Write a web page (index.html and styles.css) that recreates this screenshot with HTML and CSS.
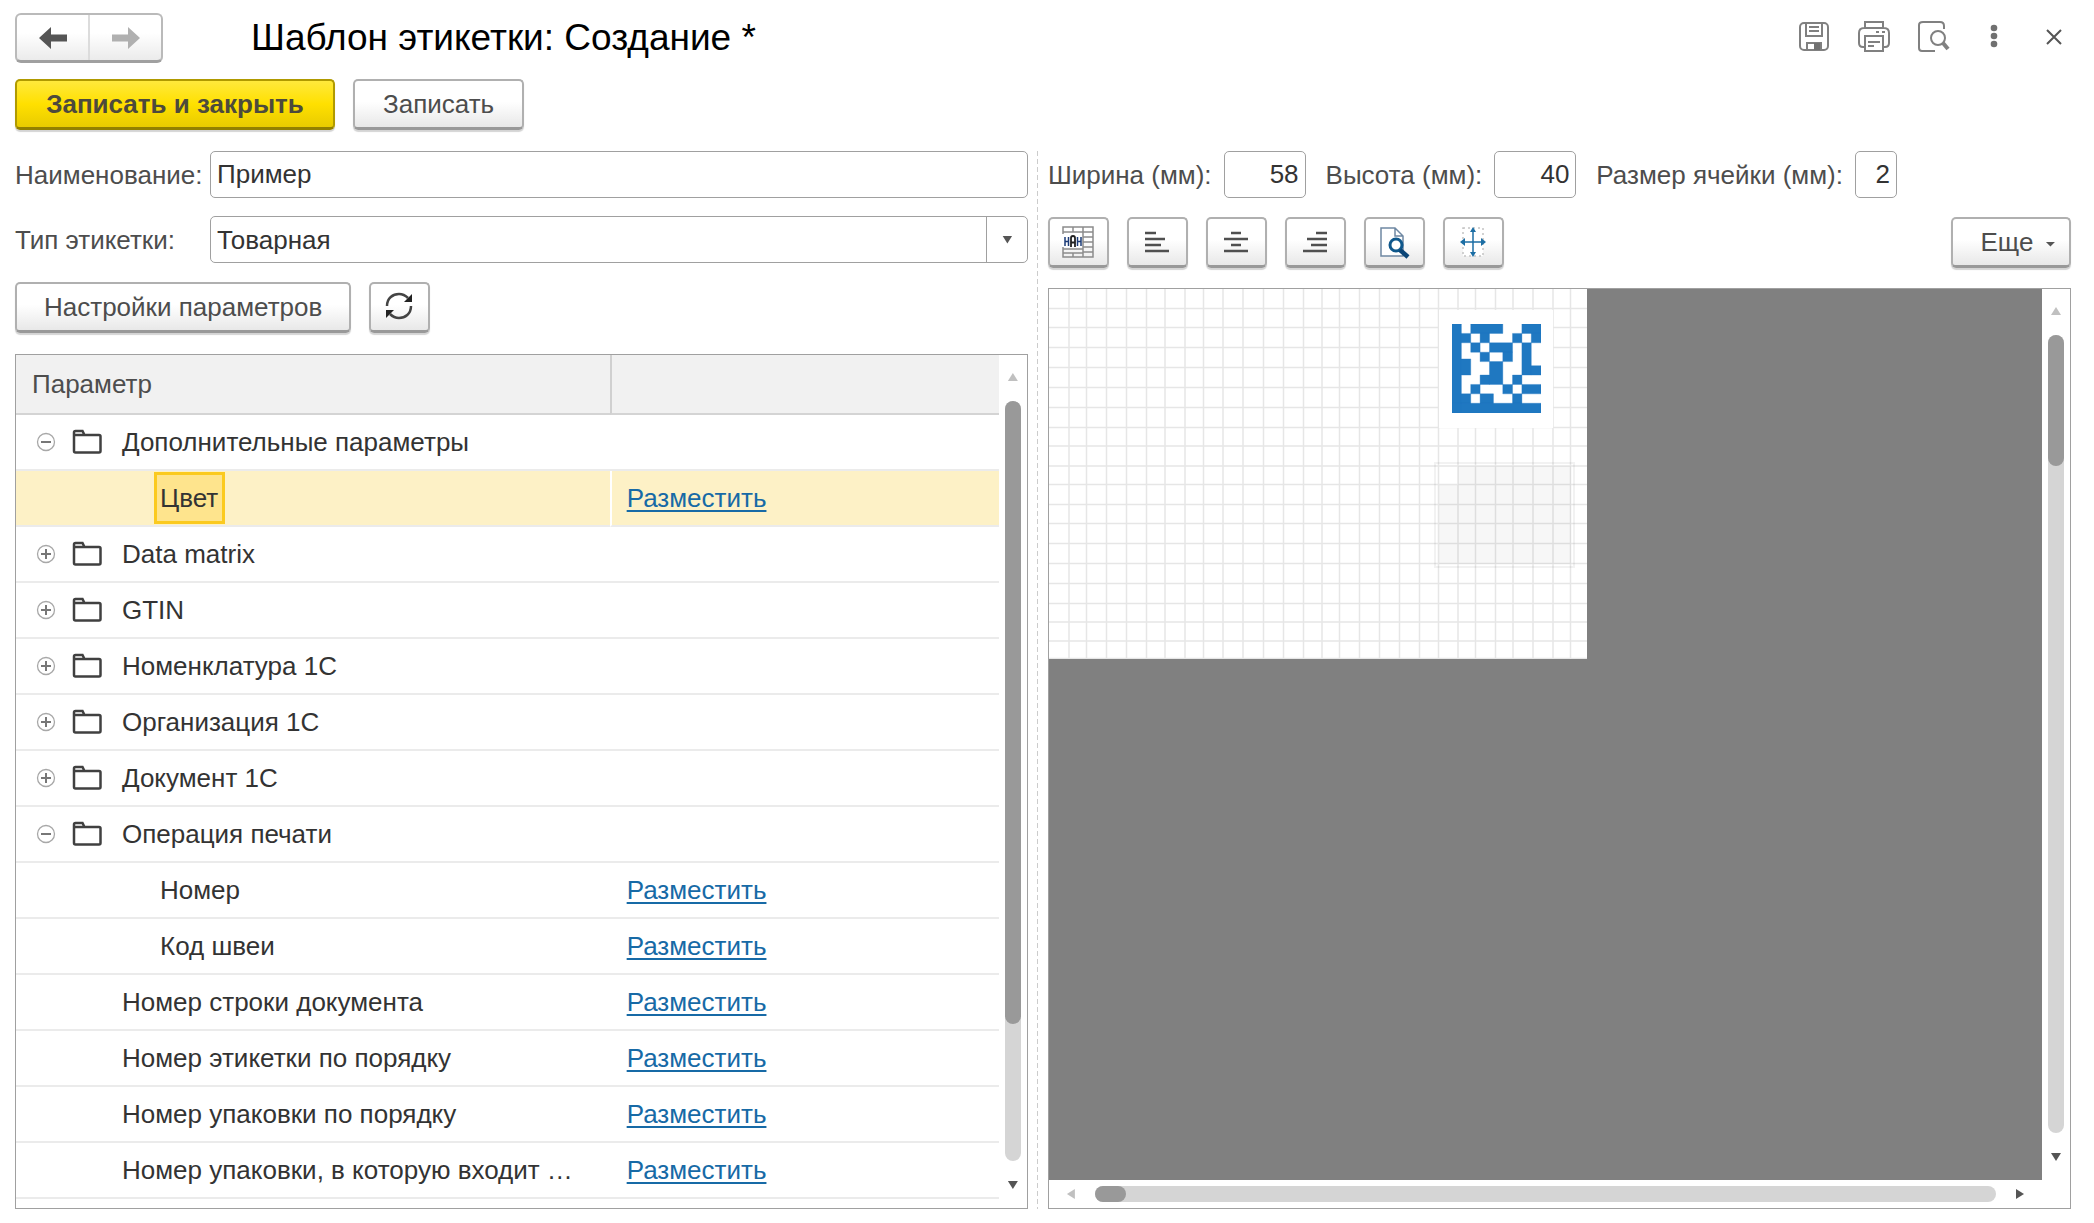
FILE: index.html
```html
<!DOCTYPE html>
<html lang="ru">
<head>
<meta charset="utf-8">
<title>Шаблон этикетки: Создание *</title>
<link rel="stylesheet" href="styles.css">
</head>
<body>
<svg class="symbols" aria-hidden="true">
  <symbol id="folder" viewBox="0 0 30 26"><path d="M2 22V3.500q0-1.500 1.500-1.500h7l2 4H27q1.500 0 1.500 1.500V22q0 1.500-1.500 1.500H3.500Q2 23.500 2 22M2 6h12" fill="none" stroke="#404040" stroke-width="2.500"/></symbol>
  <symbol id="minus" viewBox="0 0 20 20"><circle cx="10" cy="10" r="8.500" fill="none" stroke="#a8a8a8" stroke-width="1.300"/><path d="M5 10h10" stroke="#777" stroke-width="2"/></symbol>
  <symbol id="plus" viewBox="0 0 20 20"><circle cx="10" cy="10" r="8.500" fill="none" stroke="#a8a8a8" stroke-width="1.300"/><path d="M5 10h10M10 5v10" stroke="#777" stroke-width="2"/></symbol>
</svg>
<div class="window">
  <header class="titlebar">
    <div class="history">
      <button type="button" aria-label="Назад"><svg width="30" height="24" viewBox="0 0 30 24"><path d="M1 12 13 1v7.500h16v7H13V23z" fill="#555"/></svg></button>
      <button type="button" aria-label="Вперед"><svg width="30" height="24" viewBox="0 0 30 24"><path d="M29 12 17 1v7.500H1v7h16V23z" fill="#b0b0b0"/></svg></button>
    </div>
    <h1>Шаблон этикетки: Создание *</h1>
    <div class="tools">
      <button type="button" aria-label="Сохранить"><svg width="32" height="32" viewBox="0 0 32 32" fill="none" stroke="#808080" stroke-width="2"><rect x="2" y="2" width="28" height="27" rx="4"/><path d="M8 2v13h16V2M11 6h10M11 10h10M9 29v-7h14v7"/><path d="M16 22h6v7h-6z" fill="#707070" stroke="none"/></svg></button>
      <button type="button" aria-label="Печать"><svg width="32" height="32" viewBox="0 0 32 32" fill="none" stroke="#808080" stroke-width="2"><path d="M7 7V1h18v6M7 26H5q-4 0-4-4V12q0-5 5-5h20q5 0 5 5v10q0 4-4 4h-2M7 15h18v15H7zM10 21h12M10 25h6M18 11h3M24 11h3"/></svg></button>
      <button type="button" aria-label="Просмотр"><svg width="32" height="32" viewBox="0 0 32 32" fill="none" stroke="#808080" stroke-width="2"><path d="M26 8V5q0-4-4-4H5Q1 1 1 4v23q0 3 3 3h13"/><circle cx="20" cy="17" r="7"/><path d="m25 22 5 6" stroke-width="4"/></svg></button>
      <button type="button" aria-label="Меню"><svg width="32" height="32" viewBox="0 0 32 32" fill="#707070"><circle cx="16" cy="7" r="3.300"/><circle cx="16" cy="15" r="3.300"/><circle cx="16" cy="23" r="3.300"/></svg></button>
      <button type="button" aria-label="Закрыть"><svg width="32" height="32" viewBox="0 0 32 32"><path d="m9 9 14 14M23 9 9 23" stroke="#555" stroke-width="2"/></svg></button>
    </div>
  </header>
  <div class="commands">
    <button type="button" class="btn primary">Записать и закрыть</button>
    <button type="button" class="btn">Записать</button>
  </div>
  <main class="columns">
    <section class="panel">
      <div class="field"><label for="name">Наименование:</label><input id="name" class="box" type="text" value="Пример"></div>
      <div class="field"><label for="kind">Тип этикетки:</label>
        <div class="combo"><select id="kind" class="box"><option>Товарная</option></select><span class="combo-mark"><i class="arrow down"></i></span></div>
      </div>
      <div class="row">
        <button type="button" class="btn">Настройки параметров</button>
        <button type="button" class="btn icon" aria-label="Обновить"><svg width="32" height="32" viewBox="0 0 32 32"><path d="M3 15C3 7 9 3 15 3c4 0 7 2 9 4M27 15c0 8-6 12-12 12-4 0-7-2-9-4" fill="none" stroke="#444" stroke-width="2.500"/><path d="M28 3v8h-8zM2 27v-8h8z" fill="#222"/></svg></button>
      </div>
      <div class="list">
        <div class="list-view">
          <table>
            <colgroup><col class="col-name"><col></colgroup>
            <thead><tr><th>Параметр</th><th></th></tr></thead>
            <tbody>
              <tr><td><div class="cell"><svg class="twig"><use href="#minus"/></svg><svg class="folder"><use href="#folder"/></svg>Дополнительные параметры</div></td><td></td></tr>
              <tr class="selected"><td><div class="cell child"><span class="current">Цвет</span></div></td><td><a href="#">Разместить</a></td></tr>
              <tr><td><div class="cell"><svg class="twig"><use href="#plus"/></svg><svg class="folder"><use href="#folder"/></svg>Data matrix</div></td><td></td></tr>
              <tr><td><div class="cell"><svg class="twig"><use href="#plus"/></svg><svg class="folder"><use href="#folder"/></svg>GTIN</div></td><td></td></tr>
              <tr><td><div class="cell"><svg class="twig"><use href="#plus"/></svg><svg class="folder"><use href="#folder"/></svg>Номенклатура 1С</div></td><td></td></tr>
              <tr><td><div class="cell"><svg class="twig"><use href="#plus"/></svg><svg class="folder"><use href="#folder"/></svg>Организация 1С</div></td><td></td></tr>
              <tr><td><div class="cell"><svg class="twig"><use href="#plus"/></svg><svg class="folder"><use href="#folder"/></svg>Документ 1С</div></td><td></td></tr>
              <tr><td><div class="cell"><svg class="twig"><use href="#minus"/></svg><svg class="folder"><use href="#folder"/></svg>Операция печати</div></td><td></td></tr>
              <tr><td><div class="cell child">Номер</div></td><td><a href="#">Разместить</a></td></tr>
              <tr><td><div class="cell child">Код швеи</div></td><td><a href="#">Разместить</a></td></tr>
              <tr><td><div class="cell leaf">Номер строки документа</div></td><td><a href="#">Разместить</a></td></tr>
              <tr><td><div class="cell leaf">Номер этикетки по порядку</div></td><td><a href="#">Разместить</a></td></tr>
              <tr><td><div class="cell leaf">Номер упаковки по порядку</div></td><td><a href="#">Разместить</a></td></tr>
              <tr><td><div class="cell leaf">Номер упаковки, в которую входит …</div></td><td><a href="#">Разместить</a></td></tr>
            </tbody>
          </table>
        </div>
        <div class="scroll vertical"><i class="arrow up off"></i><div class="track"><div class="thumb" style="height:82%"></div></div><i class="arrow down"></i></div>
      </div>
    </section>
    <div class="splitter"></div>
    <section class="panel">
      <div class="sizes">
        <label for="w">Ширина (мм):</label><input id="w" class="box num" type="text" value="58">
        <label for="h">Высота (мм):</label><input id="h" class="box num" type="text" value="40">
        <label for="c">Размер ячейки (мм):</label><input id="c" class="box num small" type="text" value="2">
      </div>
      <div class="row toolbar">
        <button type="button" class="btn icon" aria-label="Ширина ячейки"><svg width="34" height="34" viewBox="0 0 34 34"><path d="M2 2h30v30H2zM2 7h30M12 2v5M22 2v30M2 24h20M2 28h20M12 28v4M22 12h10M22 17h10M22 22h10M22 27h10" fill="none" stroke="#8c8c8c" stroke-width="1.500"/><path d="M1 9h20v13H1z" fill="#fff"/><path d="M4 12v9M4 16.500h3M7.500 12v9M20 12v9M20 16.500h-3M16.500 12v9" stroke="#1d3c78" stroke-width="1.500"/><path d="M10 22V13q0-2 2-2t2 2v9M10 17.500h4" fill="none" stroke="#222" stroke-width="1.800"/></svg></button>
        <button type="button" class="btn icon" aria-label="По левому краю"><svg width="26" height="24" viewBox="0 0 26 24"><path d="M1 3h11M1 9h20M1 15h16M1 21h24" stroke="#505050" stroke-width="2.500"/></svg></button>
        <button type="button" class="btn icon" aria-label="По центру"><svg width="26" height="24" viewBox="0 0 26 24"><path d="M8 3h10M1 9h24M8 15h10M1 21h24" stroke="#505050" stroke-width="2.500"/></svg></button>
        <button type="button" class="btn icon" aria-label="По правому краю"><svg width="26" height="24" viewBox="0 0 26 24"><path d="M14 3h11M5 9h20M9 15h16M1 21h24" stroke="#505050" stroke-width="2.500"/></svg></button>
        <button type="button" class="btn icon" aria-label="Предпросмотр"><svg width="32" height="34" viewBox="0 0 32 34"><path d="M3 3h14l8 8v20H3zM17 3v8h8" fill="#fff" stroke="#6f88a3" stroke-width="1.500"/><circle cx="18" cy="20" r="6" fill="#fff" stroke="#0f588c" stroke-width="3"/><path d="m22 25 8 7" stroke="#0b4577" stroke-width="4.500"/></svg></button>
        <button type="button" class="btn icon" aria-label="Переместить"><svg width="28" height="34" viewBox="0 0 28 34"><path d="M4 3h20v28H4z" fill="#fff" stroke="#c4c4c4" stroke-width="1.500" stroke-dasharray="2 3"/><path d="M14 4v26M4 17h20" stroke="#1c6ea4" stroke-width="1.500"/><path d="m14 2 3 5h-6zM14 32l3-5h-6zM1 17l5-4v8zM27 17l-5-4v8z" fill="#1c6ea4"/></svg></button>
        <button type="button" class="btn more">Еще<i class="arrow down tiny"></i></button>
      </div>
      <div class="canvas">
        <div class="field-area">
          <svg class="sheet" width="538" height="370" viewBox="0 0 538 370">
            <rect width="538" height="370" fill="#fff"/>
            <path class="grid" d="M20 0v370M37.500 0v370M57.500 0v370M77.500 0v370M97.500 0v370M116 0v370M136 0v370M154.500 0v370M174 0v370M194 0v370M214.500 0v370M234.500 0v370M254.500 0v370M273 0v370M290.500 0v370M310.500 0v370M330.500 0v370M350.500 0v370M370.500 0v370M389.500 0v370M409 0v370M426.500 0v370M446.500 0v370M464 0v370M484 0v370M504 0v370M521.500 0v370"/>
            <path class="grid" d="M0 19.500h538M0 38.500h538M0 58.500h538M0 78.500h538M0 98.500h538M0 118.500h538M0 138.500h538M0 157h538M0 177h538M0 195.500h538M0 215.500h538M0 234.500h538M0 254.500h538M0 274.500h538M0 294.500h538M0 314.500h538M0 333h538M0 352h538M0 369.500h538"/>
            <rect x="390" y="21" width="114" height="118" fill="#fff"/>
            <svg x="403" y="35" width="89" height="89" viewBox="1155 162 247 265" preserveAspectRatio="none"><path fill="#1f78c1" stroke="#1f78c1" stroke-width="1" d="M1155 162h26v265h-26zM1207 162h89v28h-89zM1349 162h53v28h-53zM1181 190h26v28h-26zM1233 190h26v28h-26zM1323 190h26v28h-26zM1375 190h27v28h-27zM1207 218h26v28h-26zM1259 218h64v28h-64zM1349 218h26v96h-26zM1233 246h26v28h-26zM1296 246h27v28h-27zM1181 266h26v48h-26zM1259 274h37v68h-37zM1375 286h27v28h-27zM1233 314h26v28h-26zM1323 314h26v28h-26zM1207 342h26v28h-26zM1296 342h27v28h-27zM1349 342h53v28h-53zM1181 370h26v28h-26zM1233 370h37v28h-37zM1323 370h26v28h-26zM1155 398h247v29h-247z"/></svg>
            <path d="M409 177h113v98H390v-79h19z" fill="#000" fill-opacity=".03"/>
            <rect x="386" y="174" width="139" height="104" fill="none" stroke="#000" stroke-opacity=".05" stroke-width="2"/>
          </svg>
        </div>
        <div class="scroll vertical"><i class="arrow up off"></i><div class="track"><div class="thumb" style="height:16.400%"></div></div><i class="arrow down"></i></div>
        <div class="scroll horizontal"><i class="arrow left off"></i><div class="track"><div class="thumb" style="width:3.500%"></div></div><i class="arrow right"></i></div>
      </div>
    </section>
  </main>
</div>
</body>
</html>
```
FILE: styles.css
```css
* { box-sizing: border-box; }

body {
  margin: 0;
  background: #fff;
  color: #333;
  font: 26px/32px "Liberation Sans", Arial, sans-serif;
}

button, input, select { font: inherit; color: inherit; }
button { cursor: pointer; }
svg { display: block; flex: none; }
.symbols { position: absolute; width: 0; height: 0; }

.window {
  display: flex;
  flex-direction: column;
  min-height: 100vh;
  padding: 13px 23px 14px 15px;
}

.titlebar { display: flex; align-items: center; height: 50px; }
.titlebar h1 {
  flex: 1;
  margin: 0 0 0 88px;
  color: #000;
  font-size: 37px;
  font-weight: 400;
  line-height: 44px;
}

.history {
  display: flex;
  width: 148px;
  height: 50px;
  border: 2px solid #bababa;
  border-bottom: 3px solid #a0a0a0;
  border-radius: 6px;
  background: linear-gradient(#fff 40%, #ebebeb);
}
.history button {
  display: flex;
  flex: 1;
  align-items: center;
  justify-content: center;
  padding: 0;
  border: 0;
  background: none;
}
.history button + button { border-left: 2px solid #dcdcdc; }

.tools { display: flex; gap: 28px; padding: 0 1px 2px 0; }
.tools button { padding: 0; border: 0; background: none; }

.commands { display: flex; gap: 18px; margin: 16px 0 21px; }

.btn {
  display: flex;
  align-items: center;
  justify-content: center;
  height: 51px;
  padding: 0 27px;
  border: 2px solid #b0b0b0;
  border-bottom: 3px solid #999;
  border-radius: 5px;
  background: linear-gradient(#fff 45%, #e8e8e8);
  box-shadow: 0 2px 1px #d4d4d4;
  color: #4d4d4d;
  white-space: nowrap;
}
.commands .btn { padding: 0 28px; }
.btn.primary {
  min-width: 320px;
  border-color: #b09a00 #b09a00 #928000;
  background: linear-gradient(#ffe93c, #ffe000 50%, #e8cb00);
  color: #4d4a3c;
  font-weight: 700;
}
.btn.icon { width: 61px; padding: 0; }
.btn.more { gap: 12px; width: 120px; margin-left: auto; padding: 0 0 0 14px; }

.columns {
  display: grid;
  flex: 1;
  grid-template-columns: minmax(0, 99fr) 20px minmax(0, 100fr);
}
.panel { display: flex; flex-direction: column; }
.splitter {
  width: 1px;
  margin: 0 auto;
  background: repeating-linear-gradient(#ccc 0 5px, #fff 5px 8px);
}

.field { display: flex; align-items: center; margin-bottom: 18px; color: #4d4d4d; }
.field label { width: 195px; }

.box {
  flex: 1;
  min-width: 0;
  height: 47px;
  padding: 0 6px;
  border: 1px solid #a0a0a0;
  border-radius: 5px;
  background: #fff;
  color: #333;
}
.combo { display: flex; flex: 1; position: relative; }
.combo select { appearance: none; }
.combo-mark {
  display: flex;
  position: absolute;
  inset: 0 0 0 auto;
  align-items: center;
  justify-content: center;
  width: 42px;
  border-left: 1px solid #a0a0a0;
  pointer-events: none;
}

.row { display: flex; gap: 18px; padding-top: 1px; }

.sizes { display: flex; align-items: center; margin-bottom: 18px; color: #4d4d4d; }
.sizes label { margin-right: 12px; white-space: nowrap; }
.box.num { flex: none; width: 82px; margin-right: 20px; text-align: right; }
.box.num.small { width: 42px; }

.list {
  display: flex;
  flex: 1;
  margin-top: 21px;
  border: 1px solid #a0a0a0;
}
.list-view { flex: 1; min-width: 0; }
table { width: 100%; border-spacing: 0; table-layout: fixed; }
.col-name { width: 60.400%; }
th {
  height: 60px;
  padding: 0 16px;
  border-bottom: 2px solid #d4d4d4;
  background: #f1f1f1;
  color: #4d4d4d;
  font-weight: 400;
  text-align: left;
}
th + th { border-left: 2px solid #d0d0d0; }
td { height: 56px; padding: 0; border-bottom: 2px solid #ebebeb; }
td + td { padding-left: 17px; }
.selected td { background: #fdf1c6; }
.selected td + td { border-left: 2px solid #fff; padding-left: 15px; }
.cell { display: flex; align-items: center; height: 54px; padding-left: 20px; white-space: nowrap; }
.cell.leaf { padding-left: 106px; }
.cell.child { padding-left: 144px; }
.twig { width: 20px; height: 20px; margin-right: 16px; }
.folder { width: 30px; height: 26px; margin-right: 20px; }
.current {
  display: flex;
  align-items: center;
  height: 52px;
  margin-left: -6px;
  padding: 0 4px 0 3px;
  border: 3px solid #fbca1f;
  background: #fee48d;
}
a { color: #176aa6; text-decoration-thickness: 2px; text-underline-offset: 3px; }

.canvas {
  display: grid;
  flex: 1;
  grid-template: minmax(0, 1fr) 28px / minmax(0, 1fr) 28px;
  margin-top: 20px;
  border: 1px solid #a0a0a0;
}
.field-area { background: #808080; overflow: hidden; }
.grid { fill: none; stroke: #e6e6e6; stroke-width: 1.500; }

.scroll { display: flex; align-items: center; }
.scroll.vertical { flex-direction: column; gap: 20px; width: 28px; padding: 18px 0 19px; }
.scroll.horizontal { gap: 20px; padding: 0 18px; }
.track { flex: 1; border-radius: 8px; background: #d5d5d5; }
.vertical .track { width: 16px; }
.horizontal .track { height: 16px; }
.thumb { height: 100%; border-radius: 8px; background: #999; }

.arrow { width: 10px; height: 8px; background: #555; }
.arrow.off { background: #c0c0c0; }
.arrow.down { clip-path: polygon(0 0, 100% 0, 50% 100%); }
.arrow.up { clip-path: polygon(0 100%, 100% 100%, 50% 0); }
.arrow.left, .arrow.right { width: 8px; height: 10px; }
.arrow.left { clip-path: polygon(100% 0, 100% 100%, 0 50%); }
.arrow.right { clip-path: polygon(0 0, 100% 50%, 0 100%); }
.arrow.tiny { height: 5px; margin-top: 4px; }
```
